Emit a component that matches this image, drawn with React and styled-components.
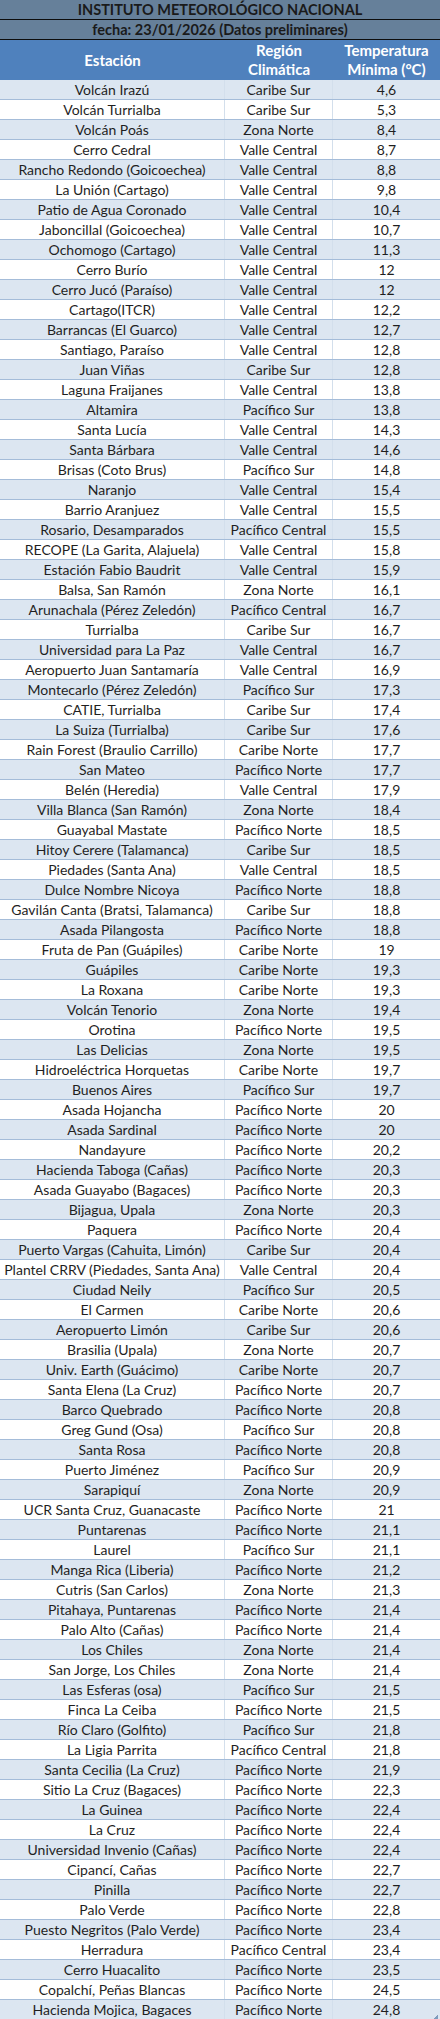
import React from "react";
import styled, { createGlobalStyle } from "styled-components";

const rows = [
  ["Volcán Irazú", "Caribe Sur", "4,6"],
  ["Volcán Turrialba", "Caribe Sur", "5,3"],
  ["Volcán Poás", "Zona Norte", "8,4"],
  ["Cerro Cedral", "Valle Central", "8,7"],
  ["Rancho Redondo (Goicoechea)", "Valle Central", "8,8"],
  ["La Unión (Cartago)", "Valle Central", "9,8"],
  ["Patio de Agua Coronado", "Valle Central", "10,4"],
  ["Jaboncillal (Goicoechea)", "Valle Central", "10,7"],
  ["Ochomogo (Cartago)", "Valle Central", "11,3"],
  ["Cerro Burío", "Valle Central", "12"],
  ["Cerro Jucó (Paraíso)", "Valle Central", "12"],
  ["Cartago(ITCR)", "Valle Central", "12,2"],
  ["Barrancas (El Guarco)", "Valle Central", "12,7"],
  ["Santiago, Paraíso", "Valle Central", "12,8"],
  ["Juan Viñas", "Caribe Sur", "12,8"],
  ["Laguna Fraijanes", "Valle Central", "13,8"],
  ["Altamira", "Pacífico Sur", "13,8"],
  ["Santa Lucía", "Valle Central", "14,3"],
  ["Santa Bárbara", "Valle Central", "14,6"],
  ["Brisas (Coto Brus)", "Pacífico Sur", "14,8"],
  ["Naranjo", "Valle Central", "15,4"],
  ["Barrio Aranjuez", "Valle Central", "15,5"],
  ["Rosario, Desamparados", "Pacífico Central", "15,5"],
  ["RECOPE (La Garita, Alajuela)", "Valle Central", "15,8"],
  ["Estación Fabio Baudrit", "Valle Central", "15,9"],
  ["Balsa, San Ramón", "Zona Norte", "16,1"],
  ["Arunachala (Pérez Zeledón)", "Pacífico Central", "16,7"],
  ["Turrialba", "Caribe Sur", "16,7"],
  ["Universidad para La Paz", "Valle Central", "16,7"],
  ["Aeropuerto Juan Santamaría", "Valle Central", "16,9"],
  ["Montecarlo (Pérez Zeledón)", "Pacífico Sur", "17,3"],
  ["CATIE, Turrialba", "Caribe Sur", "17,4"],
  ["La Suiza (Turrialba)", "Caribe Sur", "17,6"],
  ["Rain Forest (Braulio Carrillo)", "Caribe Norte", "17,7"],
  ["San Mateo", "Pacífico Norte", "17,7"],
  ["Belén (Heredia)", "Valle Central", "17,9"],
  ["Villa Blanca (San Ramón)", "Zona Norte", "18,4"],
  ["Guayabal Mastate", "Pacífico Norte", "18,5"],
  ["Hitoy Cerere (Talamanca)", "Caribe Sur", "18,5"],
  ["Piedades (Santa Ana)", "Valle Central", "18,5"],
  ["Dulce Nombre Nicoya", "Pacífico Norte", "18,8"],
  ["Gavilán Canta (Bratsi, Talamanca)", "Caribe Sur", "18,8"],
  ["Asada Pilangosta", "Pacífico Norte", "18,8"],
  ["Fruta de Pan (Guápiles)", "Caribe Norte", "19"],
  ["Guápiles", "Caribe Norte", "19,3"],
  ["La Roxana", "Caribe Norte", "19,3"],
  ["Volcán Tenorio", "Zona Norte", "19,4"],
  ["Orotina", "Pacífico Norte", "19,5"],
  ["Las Delicias", "Zona Norte", "19,5"],
  ["Hidroeléctrica Horquetas", "Caribe Norte", "19,7"],
  ["Buenos Aires", "Pacífico Sur", "19,7"],
  ["Asada Hojancha", "Pacífico Norte", "20"],
  ["Asada Sardinal", "Pacífico Norte", "20"],
  ["Nandayure", "Pacífico Norte", "20,2"],
  ["Hacienda Taboga (Cañas)", "Pacífico Norte", "20,3"],
  ["Asada Guayabo (Bagaces)", "Pacífico Norte", "20,3"],
  ["Bijagua, Upala", "Zona Norte", "20,3"],
  ["Paquera", "Pacífico Norte", "20,4"],
  ["Puerto Vargas (Cahuita, Limón)", "Caribe Sur", "20,4"],
  ["Plantel CRRV (Piedades, Santa Ana)", "Valle Central", "20,4"],
  ["Ciudad Neily", "Pacífico Sur", "20,5"],
  ["El Carmen", "Caribe Norte", "20,6"],
  ["Aeropuerto Limón", "Caribe Sur", "20,6"],
  ["Brasilia (Upala)", "Zona Norte", "20,7"],
  ["Univ. Earth (Guácimo)", "Caribe Norte", "20,7"],
  ["Santa Elena (La Cruz)", "Pacífico Norte", "20,7"],
  ["Barco Quebrado", "Pacífico Norte", "20,8"],
  ["Greg Gund (Osa)", "Pacífico Sur", "20,8"],
  ["Santa Rosa", "Pacífico Norte", "20,8"],
  ["Puerto Jiménez", "Pacífico Sur", "20,9"],
  ["Sarapiquí", "Zona Norte", "20,9"],
  ["UCR Santa Cruz, Guanacaste", "Pacífico Norte", "21"],
  ["Puntarenas", "Pacífico Norte", "21,1"],
  ["Laurel", "Pacífico Sur", "21,1"],
  ["Manga Rica (Liberia)", "Pacífico Norte", "21,2"],
  ["Cutris (San Carlos)", "Zona Norte", "21,3"],
  ["Pitahaya, Puntarenas", "Pacífico Norte", "21,4"],
  ["Palo Alto (Cañas)", "Pacífico Norte", "21,4"],
  ["Los Chiles", "Zona Norte", "21,4"],
  ["San Jorge, Los Chiles", "Zona Norte", "21,4"],
  ["Las Esferas (osa)", "Pacífico Sur", "21,5"],
  ["Finca La Ceiba", "Pacífico Norte", "21,5"],
  ["Río Claro (Golfito)", "Pacífico Sur", "21,8"],
  ["La Ligia Parrita", "Pacífico Central", "21,8"],
  ["Santa Cecilia (La Cruz)", "Pacífico Norte", "21,9"],
  ["Sitio La Cruz (Bagaces)", "Pacífico Norte", "22,3"],
  ["La Guinea", "Pacífico Norte", "22,4"],
  ["La Cruz", "Pacífico Norte", "22,4"],
  ["Universidad Invenio (Cañas)", "Pacífico Norte", "22,4"],
  ["Cipancí, Cañas", "Pacífico Norte", "22,7"],
  ["Pinilla", "Pacífico Norte", "22,7"],
  ["Palo Verde", "Pacífico Norte", "22,8"],
  ["Puesto Negritos (Palo Verde)", "Pacífico Norte", "23,4"],
  ["Herradura", "Pacífico Central", "23,4"],
  ["Cerro Huacalito", "Pacífico Norte", "23,5"],
  ["Copalchí, Peñas Blancas", "Pacífico Norte", "24,5"],
  ["Hacienda Mojica, Bagaces", "Pacífico Norte", "24,8"],
];

const Global = createGlobalStyle`
  html, body {
    margin: 0;
    padding: 0;
    background: #ffffff;
    overflow: hidden;
  }
  body {
    font-family: Lato, "Liberation Sans", sans-serif;
  }
`;

const Sheet = styled.div`
  position: relative;
  width: 440px;
  display: flex;
  flex-direction: column;
  color: #1f1f1f;
`;

const TitleRow = styled.div`
  height: 19px;
  background: #66809a;
  border-bottom: 1px solid #0d0d0d;
  display: flex;
  align-items: center;
  justify-content: center;
  font-weight: 700;
  font-size: 14.5px;
  color: #1a1a1a;
`;

const Grid = styled.div`
  display: grid;
  grid-template-columns: 225px 108px 1fr;
`;

const HeadRow = styled(Grid)`
  height: 40px;
  background: #4f81bd;
`;

const HeadCell = styled.div`
  display: flex;
  align-items: center;
  justify-content: center;
  text-align: center;
  color: #ffffff;
  font-weight: 700;
  font-size: 15px;
  line-height: 19px;
`;

const DataRow = styled(Grid)`
  height: 19px;
  background: ${(p) => (p.$striped ? "#dce6f1" : "#ffffff")};
  border-bottom: 1px solid #a4bcd9;
`;

const Cell = styled.div`
  display: flex;
  align-items: center;
  justify-content: center;
  white-space: nowrap;
  font-size: 14px;
  line-height: 19px;
  border-right: ${(p) => (p.$last ? "none" : "1px solid #d3dfec")};
`;

const Handle = styled.div`
  position: absolute;
  right: 2px;
  bottom: 1px;
  width: 4px;
  height: 4px;
  background: linear-gradient(135deg, transparent 50%, #7f9bbd 50%);
`;

export default function App() {
  return (
    <>
      <Global />
      <Sheet>
        <TitleRow>INSTITUTO METEOROLÓGICO NACIONAL</TitleRow>
        <TitleRow>fecha: 23/01/2026 (Datos preliminares)</TitleRow>
        <HeadRow>
          <HeadCell>Estación</HeadCell>
          <HeadCell>
            Región
            <br />
            Climática
          </HeadCell>
          <HeadCell>
            Temperatura
            <br />
            Mínima (°C)
          </HeadCell>
        </HeadRow>
        {rows.map(([station, region, temp], i) => (
          <DataRow key={i} $striped={i % 2 === 0}>
            <Cell>{station}</Cell>
            <Cell>{region}</Cell>
            <Cell $last>{temp}</Cell>
          </DataRow>
        ))}
        <Handle />
      </Sheet>
    </>
  );
}
